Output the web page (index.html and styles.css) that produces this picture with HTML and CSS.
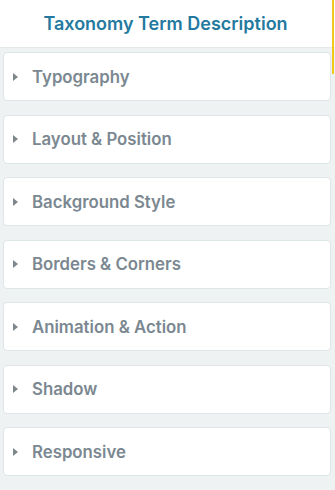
FILE: index.html
```html
<!DOCTYPE html>
<html lang="en">
<head>
    <meta charset="UTF-8">
    <meta name="viewport" content="width=device-width, initial-scale=1.0">
    <title>Taxonomy Term Description</title>
    <link rel="stylesheet" href="styles.css">
</head>
<body>

<div class="panel-header">
    <h2>Taxonomy Term Description</h2>
</div>

<!-- Style sections -->
<div class="sections">
    <div class="section"><span class="caret"></span>Typography</div>
    <div class="section"><span class="caret"></span>Layout &amp; Position</div>
    <div class="section"><span class="caret"></span>Background Style</div>
    <div class="section"><span class="caret"></span>Borders &amp; Corners</div>
    <div class="section"><span class="caret"></span>Animation &amp; Action</div>
    <div class="section"><span class="caret"></span>Shadow</div>
    <div class="section"><span class="caret"></span>Responsive</div>
</div>

<div class="scroll-mark"></div>

</body>
</html>
```

FILE: styles.css
```css
body {
    margin: 0;
    font-family: 'Inter', 'Roboto', sans-serif;
    background-color: #eef2f3;
    height: 490px;
    overflow: hidden;
}

.panel-header {
    height: 46px;
    padding-bottom: 1px;
    background-color: #fff;
    border-bottom: 1px solid #e3e9eb;
    display: flex;
    align-items: center;
    justify-content: center;
}

.panel-header h2 {
    margin: 0 0 0 -4px;
    font-size: 18px;
    font-weight: 600;
    color: #24799f;
}

.sections {
    display: flex;
    flex-direction: column;
    gap: 13.5px;
    padding: 4px 4px 0 3px;
}

.section {
    height: 47px;
    background-color: #fff;
    border: 1px solid #dfe6e8;
    border-radius: 4px;
    display: flex;
    align-items: center;
    font-size: 16.8px;
    font-weight: 600;
    color: #7b8891;
}

.caret {
    width: 0;
    height: 0;
    border-top: 4.5px solid transparent;
    border-bottom: 4.5px solid transparent;
    border-left: 5px solid #7e878c;
    margin: 0 14px 0 9px;
}

.scroll-mark {
    position: absolute;
    top: 0;
    right: 1px;
    width: 2px;
    height: 74px;
    background-color: #f2c81b;
}
```
